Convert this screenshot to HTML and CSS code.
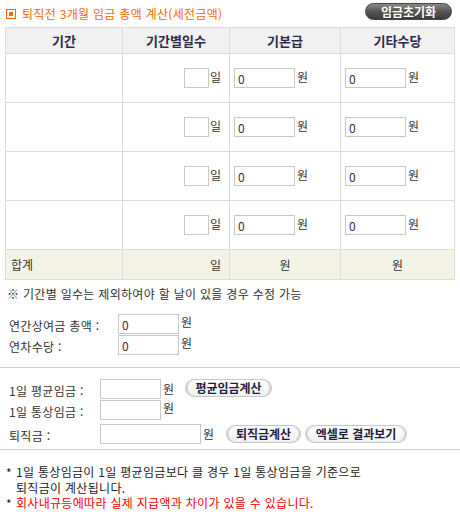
FILE: index.html
```html
<!DOCTYPE html>
<html lang="ko">
<head>
    <meta charset="UTF-8">
    <meta name="viewport" content="width=device-width, initial-scale=1.0">
    <title>퇴직금 계산</title>
    <link rel="stylesheet" href="styles.css">
</head>
<body>
    <div class="wrap">
        <div class="title-bar">
            <h2 class="title"><span class="title-icon"></span>퇴직전 3개월 임금 총액 계산(세전금액)</h2>
            <button class="reset-btn">임금초기화</button>
        </div>

        <table class="wage-table">
            <thead>
                <tr>
                    <th class="col-period">기간</th>
                    <th class="col-days">기간별일수</th>
                    <th class="col-base">기본급</th>
                    <th class="col-extra">기타수당</th>
                </tr>
            </thead>
            <tbody>
                <tr>
                    <td></td>
                    <td class="days"><input type="text" class="day-input">일</td>
                    <td class="money"><input type="text" class="money-input" value="0">원</td>
                    <td class="money"><input type="text" class="money-input" value="0">원</td>
                </tr>
                <tr>
                    <td></td>
                    <td class="days"><input type="text" class="day-input">일</td>
                    <td class="money"><input type="text" class="money-input" value="0">원</td>
                    <td class="money"><input type="text" class="money-input" value="0">원</td>
                </tr>
                <tr>
                    <td></td>
                    <td class="days"><input type="text" class="day-input">일</td>
                    <td class="money"><input type="text" class="money-input" value="0">원</td>
                    <td class="money"><input type="text" class="money-input" value="0">원</td>
                </tr>
                <tr>
                    <td></td>
                    <td class="days"><input type="text" class="day-input">일</td>
                    <td class="money"><input type="text" class="money-input" value="0">원</td>
                    <td class="money"><input type="text" class="money-input" value="0">원</td>
                </tr>
            </tbody>
            <tfoot>
                <tr class="sum-row">
                    <td>합계</td>
                    <td class="sum-days">일</td>
                    <td class="sum-money">원</td>
                    <td class="sum-money">원</td>
                </tr>
            </tfoot>
        </table>

        <p class="note">※ 기간별 일수는 제외하여야 할 날이 있을 경우 수정 가능</p>

        <div class="form bonus-form">
            <div class="form-row">
                <label class="form-label">연간상여금 총액 :</label>
                <input type="text" class="money-input" value="0">
                <span class="unit">원</span>
            </div>
            <div class="form-row">
                <label class="form-label">연차수당 :</label>
                <input type="text" class="money-input" value="0">
                <span class="unit">원</span>
            </div>
        </div>

        <hr class="divider">

        <div class="form result-form">
            <div class="form-row">
                <label class="form-label">1일 평균임금 :</label>
                <input type="text" class="money-input">
                <span class="unit">원</span>
                <button class="pill-btn btn-avg">평균임금계산</button>
            </div>
            <div class="form-row">
                <label class="form-label">1일 통상임금 :</label>
                <input type="text" class="money-input">
                <span class="unit unit-top">원</span>
            </div>
            <div class="form-row">
                <label class="form-label">퇴직금 :</label>
                <input type="text" class="money-input wide">
                <span class="unit">원</span>
                <button class="pill-btn btn-calc">퇴직금계산</button>
                <button class="pill-btn btn-excel">엑셀로 결과보기</button>
            </div>
        </div>

        <hr class="divider divider-bottom">

        <ul class="notice">
            <li>1일 통상임금이 1일 평균임금보다 클 경우 1일 통상임금을 기준으로<br>퇴직금이 계산됩니다.</li>
            <li><span class="warn">회사내규등에따라 실제 지급액과 차이가 있을 수 있습니다.</span></li>
        </ul>
    </div>
</body>
</html>
```

FILE: styles.css
```css
body {
    margin: 0;
    font-family: "Noto Sans CJK KR", "DejaVu Sans", sans-serif;
    font-size: 12px;
    color: #333;
}
.wrap {
    padding: 0 5px;
    width: 450px;
}
.title-bar {
    display: flex;
    justify-content: space-between;
    align-items: flex-start;
    height: 27px;
}
.title {
    display: flex;
    align-items: center;
    margin: 0;
    padding-top: 7px;
    font-size: 12px;
    font-weight: normal;
    line-height: 14px;
    color: #ff6600;
    letter-spacing: 0.3px;
}
.title-icon {
    width: 10px;
    height: 10px;
    box-sizing: border-box;
    border: 1px solid #ff6600;
    padding: 2px;
    background: #ff6600;
    background-clip: content-box;
    margin: 0 6px 0 1px;
}
.reset-btn {
    margin: 3px 3px 0 0;
    width: 87px;
    height: 17px;
    padding: 0;
    border: 1px solid #444;
    border-radius: 9px;
    background: linear-gradient(#8a8a8a, #555 50%, #3c3c3c);
    color: #fff;
    font-family: inherit;
    font-size: 12px;
    font-weight: bold;
    line-height: 15px;
}

.wage-table {
    width: 450px;
    border-collapse: collapse;
    table-layout: fixed;
}
.wage-table th,
.wage-table td {
    border: 1px solid #dcdcdc;
    padding: 0;
}
.wage-table th {
    height: 25px;
    background: #f1f1f1;
    color: #2e2b48;
    font-size: 13px;
    font-weight: bold;
}
.col-period { width: 116px; }
.col-days { width: 106px; }
.col-base { width: 110px; }
.col-extra { width: auto; }
.wage-table tbody td {
    height: 48px;
}
.days {
    text-align: right;
    padding-right: 8px !important;
}
.money {
    padding-left: 4px !important;
}
input {
    box-sizing: border-box;
    height: 20px;
    border: 1px solid #c8c8c8;
    padding: 0 3px;
    margin: 0;
    font-family: inherit;
    font-size: 12px;
    color: #333;
    vertical-align: middle;
}
.day-input {
    width: 25px;
    margin-right: 1px;
}
.money-input {
    width: 61px;
    margin-right: 2px;
}
.money-input.wide {
    width: 101px;
}
.sum-row td {
    height: 29px;
    background: #f3f3e6;
    padding: 0 5px;
}
.sum-days {
    text-align: right;
    padding-right: 8px !important;
}
.sum-money {
    text-align: center;
}

.note {
    margin: 6px 0 0 2px;
    line-height: 16px;
    letter-spacing: 0.3px;
}

.form {
    display: flex;
    flex-direction: column;
}
.form-row {
    display: flex;
    align-items: flex-start;
}
.form-label {
    padding: 5px 0 0 4px;
    line-height: 14px;
    letter-spacing: 0.3px;
}
.unit {
    line-height: 16px;
}
.bonus-form {
    margin-top: 12px;
    gap: 1px;
}
.bonus-form .form-label {
    width: 109px;
}
.result-form {
    margin-top: 11px;
}
.result-form .form-row {
    height: 21px;
}
.result-form .form-row:last-child {
    margin-top: 3px;
}
.result-form .form-label {
    width: 91px;
}
.result-form .unit {
    line-height: 20px;
}
.result-form .unit-top {
    line-height: 16px;
}

.divider {
    margin: 12px -5px 0;
    border: 0;
    border-top: 1px solid #d2d2d2;
    height: 0;
}
.divider-bottom {
    margin-top: 4px;
}

.pill-btn {
    height: 18px;
    padding: 0 6px;
    margin-left: 2px;
    border: 1px solid #c9c9c9;
    border-radius: 9px;
    background: linear-gradient(#fff, #f2f2f2);
    box-shadow: inset 2px 0 2px -1px #bbb, inset -2px 0 2px -1px #bbb;
    color: #1f1d3d;
    font-family: inherit;
    font-size: 12px;
    font-weight: bold;
    line-height: 16px;
}
.btn-avg {
    width: 87px;
    margin-left: 11px;
}
.btn-calc {
    width: 75px;
    margin-left: 12px;
    margin-top: 1px;
}
.btn-excel {
    width: 102px;
    margin-left: 4px;
    margin-top: 1px;
}

.notice {
    list-style: none;
    margin: 14px 0 0;
    padding: 0;
    line-height: 15.5px;
    color: #222;
    letter-spacing: 0.3px;
}
.notice li {
    position: relative;
    padding-left: 11px;
}
.notice li::before {
    content: "*";
    position: absolute;
    left: 1px;
    top: 1px;
}
.warn {
    color: #ff0000;
}
```
